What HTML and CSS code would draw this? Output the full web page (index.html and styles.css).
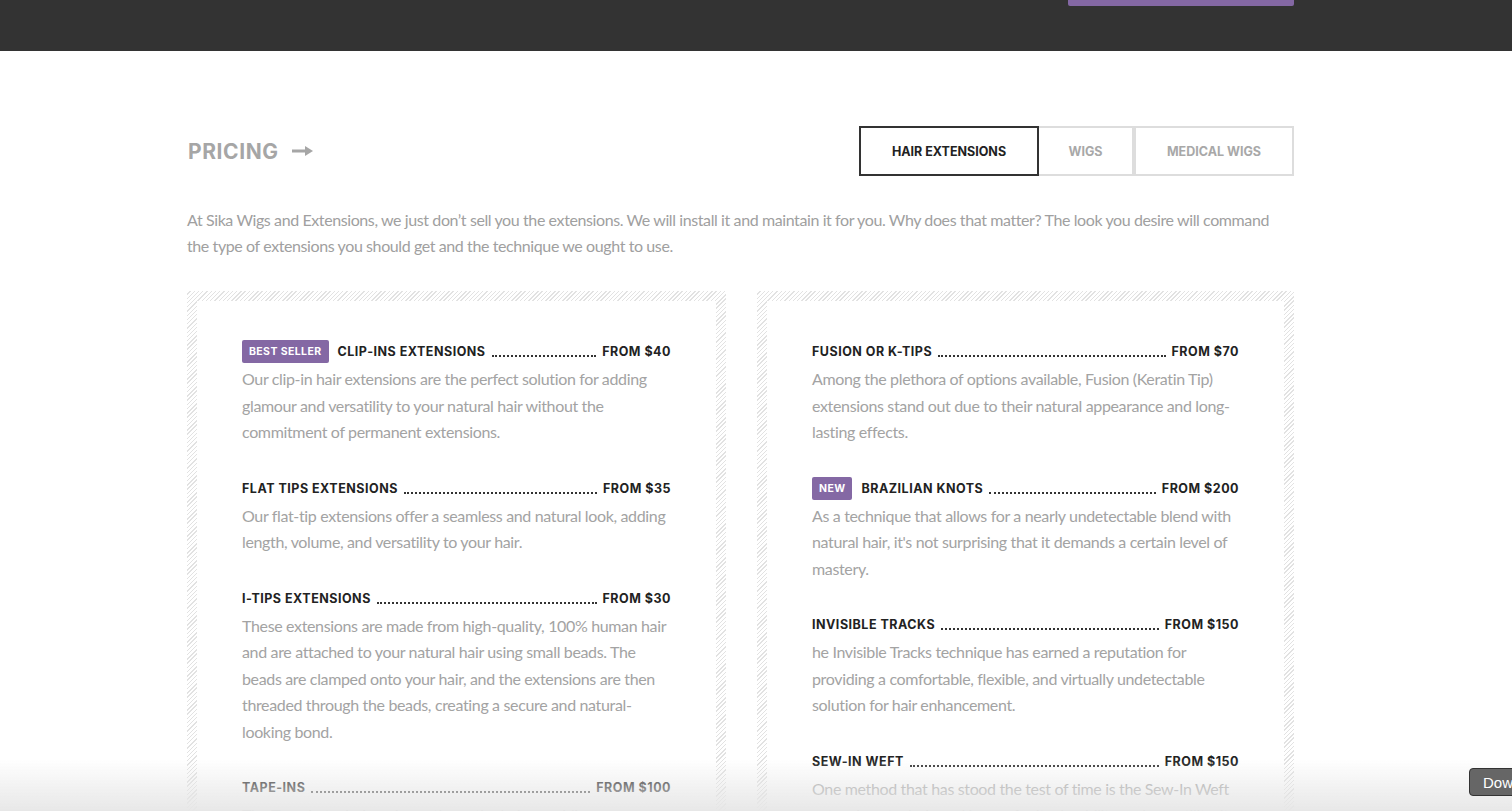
FILE: index.html
```html
<!DOCTYPE html>
<html lang="en">
<head>
    <meta charset="UTF-8">
    <meta name="viewport" content="width=device-width, initial-scale=1.0">
    <title>Sika Wigs and Extensions - Pricing</title>
    <link rel="stylesheet" href="styles.css">
</head>
<body>
    <header class="top-bar">
        <div class="container top-inner">
            <a href="#" class="book-btn"></a>
        </div>
    </header>

    <section class="pricing">
        <div class="container">
            <div class="pricing-head">
                <h2 class="pricing-title">PRICING
                    <svg class="arrow" width="21" height="10" viewBox="0 0 21 10">
                        <rect x="0" y="3.5" width="14" height="3" fill="#a6a6a6"/>
                        <path d="M13 0 L21 5 L13 10 Z" fill="#a6a6a6"/>
                    </svg>
                </h2>
                <div class="tabs">
                    <button class="tab active">HAIR EXTENSIONS</button>
                    <button class="tab tab-wigs">WIGS</button>
                    <button class="tab tab-medical">MEDICAL WIGS</button>
                </div>
            </div>

            <p class="intro">At Sika Wigs and Extensions, we just don’t sell you the extensions. We will install it and maintain it for you. Why does that matter? The look you desire will command the type of extensions you should get and the technique we ought to use.</p>

            <div class="price-grid">
                <div class="card">
                    <div class="card-inner">
                        <div class="item">
                            <div class="item-head">
                                <span class="badge">BEST SELLER</span>
                                <span class="item-name">CLIP-INS EXTENSIONS</span>
                                <span class="dots"></span>
                                <span class="item-price">FROM $40</span>
                            </div>
                            <p class="item-desc">Our clip-in hair extensions are the perfect solution for adding glamour and versatility to your natural hair without the commitment of permanent extensions.</p>
                        </div>
                        <div class="item">
                            <div class="item-head">
                                <span class="item-name">FLAT TIPS EXTENSIONS</span>
                                <span class="dots"></span>
                                <span class="item-price">FROM $35</span>
                            </div>
                            <p class="item-desc">Our flat-tip extensions offer a seamless and natural look, adding length, volume, and versatility to your hair.</p>
                        </div>
                        <div class="item">
                            <div class="item-head">
                                <span class="item-name">I-TIPS EXTENSIONS</span>
                                <span class="dots"></span>
                                <span class="item-price">FROM $30</span>
                            </div>
                            <p class="item-desc">These extensions are made from high-quality, 100% human hair and are attached to your natural hair using small beads. The beads are clamped onto your hair, and the extensions are then threaded through the beads, creating a secure and natural-looking bond.</p>
                        </div>
                        <div class="item">
                            <div class="item-head">
                                <span class="item-name">TAPE-INS</span>
                                <span class="dots"></span>
                                <span class="item-price">FROM $100</span>
                            </div>
                            <p class="item-desc">The Tape-In technique is gentle on the hair, providing a non-damaging way to add length and volume to your natural hair.</p>
                        </div>
                    </div>
                </div>

                <div class="card">
                    <div class="card-inner">
                        <div class="item">
                            <div class="item-head">
                                <span class="item-name">FUSION OR K-TIPS</span>
                                <span class="dots"></span>
                                <span class="item-price">FROM $70</span>
                            </div>
                            <p class="item-desc">Among the plethora of options available, Fusion (Keratin Tip) extensions stand out due to their natural appearance and long-lasting effects.</p>
                        </div>
                        <div class="item">
                            <div class="item-head">
                                <span class="badge">NEW</span>
                                <span class="item-name">BRAZILIAN KNOTS</span>
                                <span class="dots"></span>
                                <span class="item-price">FROM $200</span>
                            </div>
                            <p class="item-desc">As a technique that allows for a nearly undetectable blend with natural hair, it's not surprising that it demands a certain level of mastery.</p>
                        </div>
                        <div class="item">
                            <div class="item-head">
                                <span class="item-name">INVISIBLE TRACKS</span>
                                <span class="dots"></span>
                                <span class="item-price">FROM $150</span>
                            </div>
                            <p class="item-desc">he Invisible Tracks technique has earned a reputation for providing a comfortable, flexible, and virtually undetectable solution for hair enhancement.</p>
                        </div>
                        <div class="item">
                            <div class="item-head">
                                <span class="item-name">SEW-IN WEFT</span>
                                <span class="dots"></span>
                                <span class="item-price">FROM $150</span>
                            </div>
                            <p class="item-desc">One method that has stood the test of time is the Sew-In Weft extensions technique. Known for its durability and versatility, it remains a favourite.</p>
                        </div>
                    </div>
                </div>
            </div>
        </div>
    </section>

    <div class="bottom-fade"></div>
    <button class="download-btn">Download</button>
</body>
</html>
```

FILE: styles.css
```css
:root {
    --dark: #333333;
    --purple: #8468a4;
    --heading: #222222;
    --muted: #a3a3a3;
    --line: #dddddd;
}

body {
    margin: 0;
    font-family: Lato, 'Open Sans', sans-serif;
    background-color: #ffffff;
    color: var(--muted);
}

.container {
    width: 1138px;
    margin: 0 auto;
    padding-right: 31px;
    box-sizing: border-box;
}

/* Top bar */
.top-bar {
    background-color: var(--dark);
    height: 51px;
}

.top-inner {
    display: flex;
    justify-content: flex-end;
}

.book-btn {
    display: block;
    width: 226px;
    height: 6px;
    background-color: var(--purple);
    border-radius: 0 0 2px 2px;
}

/* Pricing */
.pricing {
    padding-top: 75px;
}

.pricing-head {
    display: flex;
    justify-content: space-between;
    align-items: center;
}

.pricing-title {
    display: flex;
    align-items: center;
    margin: 0 0 0 1px;
    font-family: Inter, 'Open Sans', sans-serif;
    font-size: 21px;
    font-weight: 700;
    letter-spacing: 0.6px;
    color: #a6a6a6;
}

.pricing-title .arrow {
    margin-left: 13px;
}

.tabs {
    display: flex;
}

.tab {
    height: 50px;
    padding: 0;
    background: #ffffff;
    border: 2px solid var(--line);
    font-family: Inter, 'Open Sans', sans-serif;
    font-size: 12.5px;
    font-weight: 700;
    color: #a8a8a8;
    cursor: pointer;
}

.tab.active {
    width: 180px;
    border-color: var(--dark);
    color: var(--heading);
}

.tab-wigs {
    width: 95px;
    border-left: none;
}

.tab-medical {
    width: 160px;
    border-left: 2px solid var(--line);
}

.intro {
    margin: 31px 0 32px;
    font-size: 16px;
    line-height: 26px;
    letter-spacing: -0.4px;
    color: #a0a0a0;
}

/* Cards */
.price-grid {
    display: grid;
    grid-template-columns: 539px 537px;
    column-gap: 31px;
}

.card {
    padding: 10px;
    background: repeating-linear-gradient(135deg, #ffffff 0 2px, #e2e2e2 2px 3px);
}

.card-inner {
    background-color: #ffffff;
    padding: 39px 45px 40px;
}

.item {
    margin-bottom: 31px;
}

.item-head {
    display: flex;
    align-items: center;
    height: 23px;
    margin-bottom: 3px;
    font-family: Inter, 'Open Sans', sans-serif;
    font-size: 12.5px;
    font-weight: 700;
    letter-spacing: 0.5px;
    color: var(--heading);
}

.badge {
    display: inline-flex;
    align-items: center;
    height: 23px;
    padding: 0 7px;
    margin-right: 9px;
    background-color: var(--purple);
    border-radius: 2px;
    color: #ffffff;
    font-size: 10.5px;
    letter-spacing: 0.4px;
}

.dots {
    flex: 1;
    align-self: flex-end;
    margin: 0 6px 6px;
    border-bottom: 2px dotted #333333;
}

.item-desc {
    margin: 0;
    font-size: 16px;
    line-height: 26.5px;
    letter-spacing: -0.35px;
    color: #a3a3a3;
}

/* Bottom overlay */
.bottom-fade {
    position: fixed;
    left: 0;
    right: 0;
    bottom: 0;
    height: 52px;
    background: linear-gradient(to bottom, rgba(255, 255, 255, 0), rgba(230, 230, 230, 0.95));
    pointer-events: none;
}

.download-btn {
    position: fixed;
    left: 1469px;
    bottom: 15px;
    height: 28px;
    padding: 0 13px;
    background-color: #666666;
    border: 1px solid #333333;
    border-radius: 4px;
    color: #ffffff;
    font-family: 'Liberation Sans', Arial, sans-serif;
    font-size: 15px;
    white-space: nowrap;
}
```
